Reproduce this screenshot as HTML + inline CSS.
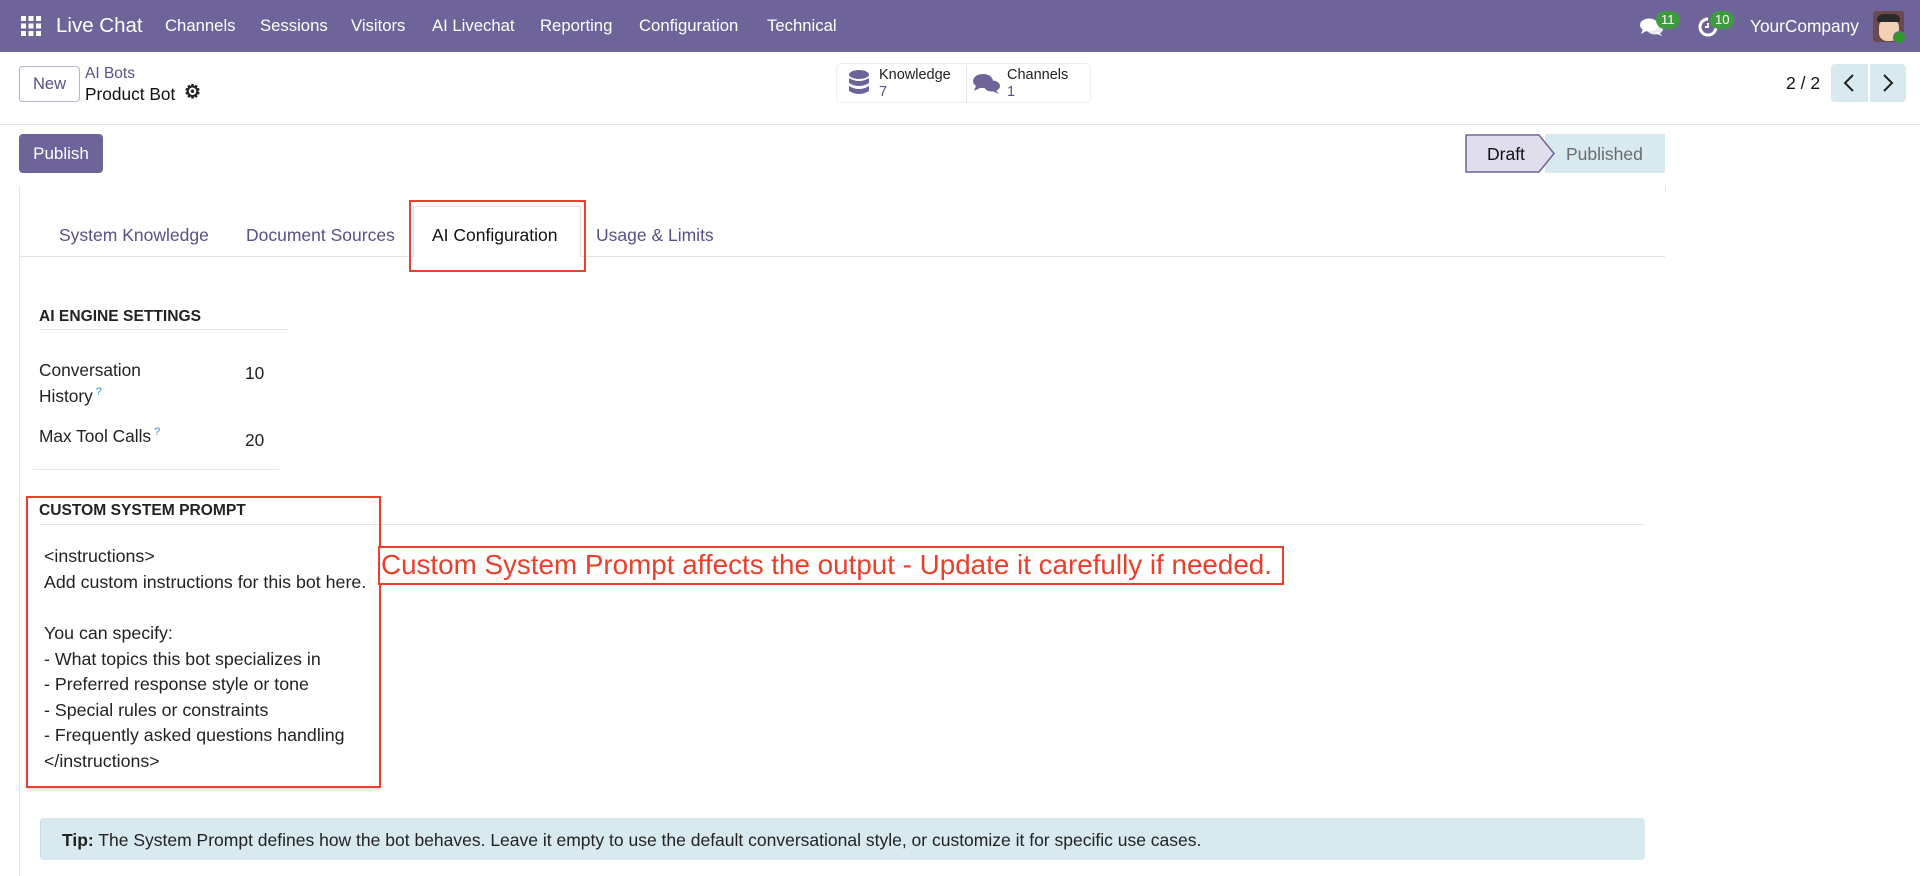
<!DOCTYPE html>
<html><head><meta charset="utf-8"><style>
*{box-sizing:border-box;margin:0;padding:0}
body{width:1920px;height:876px;overflow:hidden;background:#fff;font-family:"Liberation Sans",sans-serif;color:#1f1f1f;position:relative}
.a{position:absolute;white-space:nowrap}
.nav{position:absolute;left:0;top:0;width:1920px;height:52px;background:#6f6499}
.nav .a{color:#fff;font-size:16.7px;top:16px}
.badge{position:absolute;background:#3f9b3f;color:#fff;font-size:13px;border-radius:9px;height:18px;line-height:18px;padding:0 5px}
.tab{position:absolute;top:225px;font-size:17.5px;color:#5b4f8a}
.lbl{font-size:17.3px;color:#222}
.q{color:#3b8ec9;font-size:11px;vertical-align:top;margin-left:3px}
.pl{position:absolute;left:44px;font-size:17.8px;color:#222}
</style></head><body>
<div class="nav">
  <svg class="a" style="left:21px;top:16px" width="20" height="20" viewBox="0 0 20 20" fill="#fff"><rect x="0" y="0" width="5" height="5"/><rect x="7.5" y="0" width="5" height="5"/><rect x="15" y="0" width="5" height="5"/><rect x="0" y="7.5" width="5" height="5"/><rect x="7.5" y="7.5" width="5" height="5"/><rect x="15" y="7.5" width="5" height="5"/><rect x="0" y="15" width="5" height="5"/><rect x="7.5" y="15" width="5" height="5"/><rect x="15" y="15" width="5" height="5"/></svg>
  <div class="a" style="left:56px;top:14px;font-size:20.5px">Live Chat</div>
  <div class="a" style="left:165px">Channels</div>
  <div class="a" style="left:260px">Sessions</div>
  <div class="a" style="left:351px">Visitors</div>
  <div class="a" style="left:432px">AI Livechat</div>
  <div class="a" style="left:540px">Reporting</div>
  <div class="a" style="left:639px">Configuration</div>
  <div class="a" style="left:767px">Technical</div>
  <svg class="a" style="left:1640px;top:17px" width="24" height="20" viewBox="0 0 24 20" fill="#fff"><ellipse cx="9" cy="8" rx="9" ry="6.5"/><path d="M3 12 L1 17 L8 13Z"/><ellipse cx="15" cy="12" rx="8" ry="5.5" opacity=".85"/><path d="M19 15 L22 19 L15 16Z"/></svg>
  <div class="badge" style="left:1656px;top:11px">11</div>
  <svg class="a" style="left:1697px;top:16px" width="22" height="22" viewBox="0 0 22 22" fill="none" stroke="#fff" stroke-width="3"><path d="M11 3 A8 8 0 1 0 19 11"/><path d="M11 7 V11 H8" stroke-width="2"/></svg>
  <div class="badge" style="left:1710px;top:11px">10</div>
  <div class="a" style="left:1750px;top:16px;font-size:17.3px">YourCompany</div>
  <div class="a" style="left:1873px;top:11px;width:31px;height:31px;background:#6b4a4e;border-radius:3px;overflow:hidden">
    <div style="position:absolute;left:6px;top:8px;width:20px;height:22px;background:#f2d2b4;border-radius:8px"></div>
    <div style="position:absolute;left:4px;top:3px;width:23px;height:8px;background:#2a2a2a;border-radius:6px 6px 2px 2px"></div>
  </div>
  <div class="a" style="left:1893px;top:31px;width:13px;height:13px;border-radius:50%;background:#2e9a2e;border:1.5px solid #6f6499"></div>
</div>

<div class="a" style="left:19px;top:66px;width:61px;height:36px;border:1px solid #b9b2d0;border-radius:4px;font-size:16.5px;color:#5b4f8a;text-align:center;line-height:34px">New</div>
<div class="a" style="left:85px;top:65px;font-size:15.5px;color:#5b4f8a">AI Bots</div>
<div class="a" style="left:85px;top:84px;font-size:17.3px;color:#111">Product Bot</div>
<div class="a" style="left:184px;top:81px;font-size:19px;color:#222;font-weight:bold">⚙</div>

<div class="a" style="left:836px;top:63px;width:255px;height:40px;border:1px solid #eee;border-radius:5px"></div>
<div class="a" style="left:966px;top:66px;width:1px;height:36px;background:#e5e5e5"></div>
<svg class="a" style="left:849px;top:70px" width="20" height="26" viewBox="0 0 20 26" fill="#6f6499"><ellipse cx="10" cy="4.5" rx="10" ry="4.5"/><path d="M0 8 Q10 14 20 8 V13 Q10 19 0 13Z"/><path d="M0 16 Q10 22 20 16 V21 Q10 27 0 21Z"/></svg>
<div class="a" style="left:879px;top:67px;font-size:14.5px;color:#222">Knowledge</div>
<div class="a" style="left:879px;top:84px;font-size:14.5px;color:#5b4f8a">7</div>
<svg class="a" style="left:973px;top:73px" width="28" height="22" viewBox="0 0 28 22" fill="#6f6499"><ellipse cx="10" cy="8" rx="10" ry="7"/><path d="M3 13 L1 18 L9 14Z"/><ellipse cx="19" cy="13" rx="8" ry="5.5"/><path d="M22 16 L26 21 L17 17Z"/></svg>
<div class="a" style="left:1007px;top:67px;font-size:14.5px;color:#222">Channels</div>
<div class="a" style="left:1007px;top:84px;font-size:14.5px;color:#5b4f8a">1</div>

<div class="a" style="left:1786px;top:73px;font-size:17.5px;color:#111">2 / 2</div>
<div class="a" style="left:1831px;top:64px;width:37px;height:38px;background:#d8eaf0;border-radius:4px 0 0 4px"></div>
<div class="a" style="left:1870px;top:64px;width:36px;height:38px;background:#d8eaf0;border-radius:0 4px 4px 0"></div>
<svg class="a" style="left:1843px;top:74px" width="12" height="18" viewBox="0 0 12 18" fill="none" stroke="#222" stroke-width="2"><path d="M10 1 L2 9 L10 17"/></svg>
<svg class="a" style="left:1882px;top:74px" width="12" height="18" viewBox="0 0 12 18" fill="none" stroke="#222" stroke-width="2"><path d="M2 1 L10 9 L2 17"/></svg>

<div class="a" style="left:0;top:124px;width:1920px;height:1px;background:#e6e6e6"></div>

<div class="a" style="left:19px;top:134px;width:84px;height:39px;background:#6f6499;border-radius:4px;color:#fff;font-size:17px;text-align:center;line-height:39px;font-weight:500">Publish</div>

<div class="a" style="left:1545px;top:134px;width:120px;height:39px;background:#d8eaf0"></div>
<svg class="a" style="left:1465px;top:134px" width="92" height="39" viewBox="0 0 92 39"><path d="M1 1 H74 L89 19.5 L74 38 H1Z" fill="#e0dded" stroke="#6f6499" stroke-width="1.5"/></svg>
<div class="a" style="left:1487px;top:144px;font-size:17.5px;color:#111">Draft</div>
<div class="a" style="left:1566px;top:144px;font-size:17.5px;color:#6b6b6b">Published</div>

<div class="a" style="left:19px;top:186px;width:1px;height:690px;background:#e6e6e6"></div>
<div class="a" style="left:1665px;top:186px;width:1px;height:6px;background:#e6e6e6"></div>
<div class="a" style="left:20px;top:256px;width:1645px;height:1px;background:#e2e2e2"></div>

<div class="tab" style="left:59px">System Knowledge</div>
<div class="tab" style="left:246px">Document Sources</div>
<div class="a" style="left:413px;top:206px;width:168px;height:51px;background:#fff;border:1px solid #e2e2e2;border-bottom:none"></div>
<div class="tab" style="left:432px;color:#111">AI Configuration</div>
<div class="tab" style="left:596px">Usage &amp; Limits</div>
<div class="a" style="left:409px;top:200px;width:177px;height:72px;border:2px solid #e8402a"></div>

<div class="a" style="left:39px;top:308px;font-size:15.6px;font-weight:bold;color:#222">AI ENGINE SETTINGS</div>
<div class="a" style="left:39px;top:329px;width:249px;height:1px;background:#e6e6e6"></div>
<div class="a lbl" style="left:39px;top:360px">Conversation</div>
<div class="a lbl" style="left:39px;top:386px">History<span class="q">?</span></div>
<div class="a lbl" style="left:245px;top:363px">10</div>
<div class="a lbl" style="left:39px;top:426px">Max Tool Calls<span class="q">?</span></div>
<div class="a lbl" style="left:245px;top:430px">20</div>
<div class="a" style="left:33px;top:469px;width:246px;height:1px;background:#e6e6e6"></div>

<div class="a" style="left:39px;top:502px;font-size:15.6px;font-weight:bold;color:#222">CUSTOM SYSTEM PROMPT</div>
<div class="a" style="left:39px;top:524px;width:1606px;height:1px;background:#e6e6e6"></div>
<div class="a" style="left:26px;top:496px;width:355px;height:292px;border:2px solid #e8402a;box-shadow:0 2px 3px rgba(0,0,0,.15)"></div>
<div class="pl" style="top:546px">&lt;instructions&gt;</div>
<div class="pl" style="top:572px">Add custom instructions for this bot here.</div>
<div class="pl" style="top:623px">You can specify:</div>
<div class="pl" style="top:649px">- What topics this bot specializes in</div>
<div class="pl" style="top:674px">- Preferred response style or tone</div>
<div class="pl" style="top:700px">- Special rules or constraints</div>
<div class="pl" style="top:725px">- Frequently asked questions handling</div>
<div class="pl" style="top:751px">&lt;/instructions&gt;</div>

<div class="a" style="left:378px;top:546px;width:906px;height:39px;border:2px solid #e8402a;background:#fff"></div>
<div class="a" style="left:381px;top:549px;font-size:27.8px;color:#e8402a">Custom System Prompt affects the output - Update it carefully if needed.</div>

<div class="a" style="left:40px;top:818px;width:1605px;height:42px;background:#d8eaf0;border-radius:4px;border-left:1px solid #c3dde6"></div>
<div class="a" style="left:62px;top:830px;font-size:17.5px;color:#222"><b>Tip:</b> The System Prompt defines how the bot behaves. Leave it empty to use the default conversational style, or customize it for specific use cases.</div>
</body></html>
